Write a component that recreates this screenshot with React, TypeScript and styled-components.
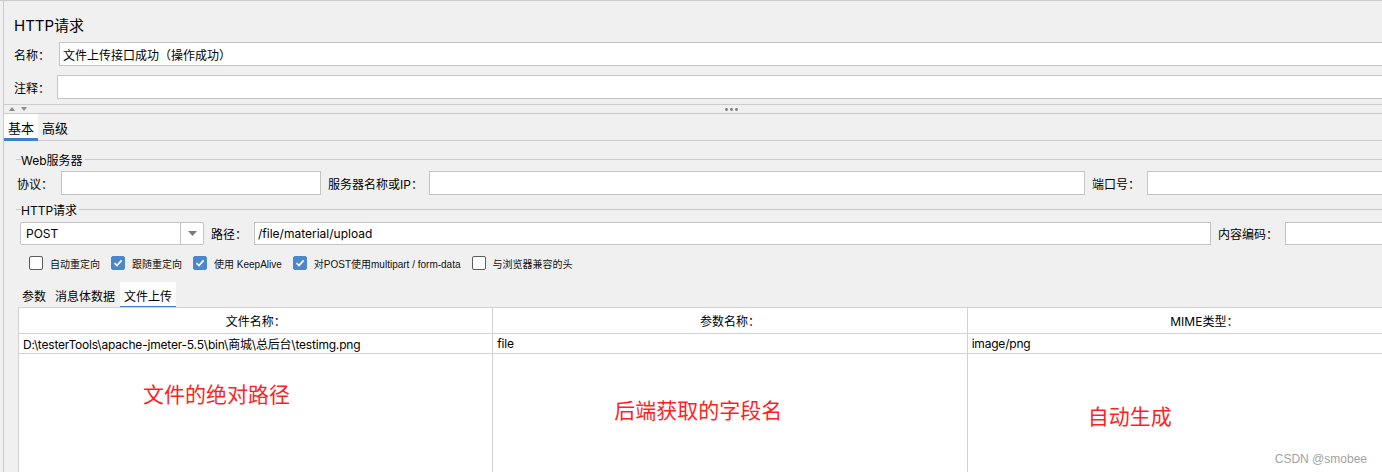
import styled, { createGlobalStyle } from 'styled-components'

const GlobalStyle = createGlobalStyle`
    html, body {
        margin: 0;
        padding: 0;
        background: #f0f0f0;
    }
    body {
        font-family: Inter, "Noto Sans CJK SC", sans-serif;
        font-size: 12px;
        color: #000;
    }
`

const LINE = '#cbcbcb'
const BLUE = '#3f80c9'

const Screen = styled.div`
    position: relative;
    width: 1382px;
    height: 472px;
    overflow: hidden;
    box-sizing: border-box;
    padding-left: 3px;
    background: #f0f0f0;
    border-top: 1px solid ${LINE};
`

const Panel = styled.div`
    width: 1454px;
    height: 100%;
    display: flex;
    flex-direction: column;
    border-left: 1px solid ${LINE};
`

const Title = styled.div`
    height: 41px;
    box-sizing: border-box;
    padding: 5px 0 0 10px;
    display: flex;
    align-items: center;
    font-size: 15px;
`

const Row = styled.div<{ $top?: number; $left: number; $h?: number }>`
    display: flex;
    align-items: center;
    height: ${p => p.$h ?? 24}px;
    margin-top: ${p => p.$top ?? 0}px;
    padding-left: ${p => p.$left}px;
`

const Label = styled.span<{ $w: number; $gap?: number }>`
    flex: none;
    width: ${p => p.$w}px;
    margin-left: ${p => p.$gap ?? 0}px;
    white-space: nowrap;
    font-size: 12px;
`

const Field = styled.input<{ $w?: number }>`
    box-sizing: border-box;
    height: 100%;
    ${p => (p.$w ? `width: ${p.$w}px; flex: none;` : 'flex: 1; min-width: 0;')}
    margin: 0;
    padding: 0 3px;
    border: 1px solid #c4c4c4;
    background: #fff;
    font: inherit;
    font-size: 12px;
    color: #000;
    outline: none;
`

const Splitter = styled.div`
    margin-top: 5px;
    height: 10px;
    box-sizing: border-box;
    border-top: 1px solid ${LINE};
    border-bottom: 1px solid ${LINE};
    display: grid;
    grid-template-columns: 30px 1fr 30px;
    align-items: center;
`

const Arrows = styled.svg`
    margin-left: 5px;
    display: block;
`

const Dots = styled.svg`
    justify-self: center;
    display: block;
`

const TabBar = styled.div`
    display: flex;
    height: 27px;
    box-sizing: border-box;
    border-bottom: 1px solid ${LINE};
`

const Tab = styled.div<{ $active?: boolean; $size: number }>`
    height: ${p => (p.$active ? 27 : 26)}px;
    box-sizing: border-box;
    padding: 0 4px;
    display: flex;
    align-items: center;
    font-size: ${p => p.$size}px;
    background: ${p => (p.$active ? '#fff' : 'transparent')};
    border-bottom: ${p => (p.$active ? `3px solid ${BLUE}` : 'none')};
    padding-top: ${p => (p.$active ? 2 : 0)}px;
`

const GroupHeader = styled.div<{ $top: number }>`
    display: flex;
    align-items: center;
    height: 16px;
    margin: ${p => p.$top}px 0 0 12px;
    font-size: 12px;

    &::before {
        content: '';
        width: 5px;
        height: 1px;
        background: ${LINE};
    }
    &::after {
        content: '';
        flex: 1;
        height: 1px;
        background: ${LINE};
    }
`

const Legend = styled.span`
    padding: 0 2px 0 0;
`

const Combo = styled.div`
    flex: none;
    width: 184px;
    height: 100%;
    box-sizing: border-box;
    display: flex;
    border: 1px solid #c4c4c4;
    border-radius: 2px;
    background: #fff;
`

const ComboText = styled.span`
    width: 159px;
    padding-left: 5px;
    box-sizing: border-box;
    display: flex;
    align-items: center;
    font-size: 12px;
`

const ComboButton = styled.span`
    flex: 1;
    border-left: 1px solid #c4c4c4;
    display: flex;
    align-items: center;
    justify-content: center;
`

const Checks = styled.div`
    display: flex;
    align-items: center;
    gap: 11px;
    height: 14px;
    margin-top: 11px;
    padding-left: 25px;
`

const CheckItem = styled.label`
    display: flex;
    align-items: center;
    gap: 7px;
    font-family: "Liberation Sans", "Noto Sans CJK SC", sans-serif;
    font-size: 10px;
    color: #111;
    white-space: nowrap;
`

const Box = styled.span<{ $on?: boolean }>`
    width: 14px;
    height: 14px;
    box-sizing: border-box;
    border-radius: 2px;
    display: flex;
    align-items: center;
    justify-content: center;
    background: ${p => (p.$on ? '#4a87cd' : '#fff')};
    border: 1px solid ${p => (p.$on ? '#4a87cd' : '#5c5c5c')};
`

const SubTabs = styled.div`
    display: flex;
    gap: 1px;
    height: 25px;
    margin-top: 12px;
    padding-left: 14px;
`

const Table = styled.div`
    flex: 1;
    width: 1424px;
    margin-left: 14px;
    box-sizing: border-box;
    display: grid;
    grid-template-columns: repeat(3, 1fr);
    grid-template-rows: 26px 20px 1fr;
    background: #fff;
    border-top: 1px solid #d2d2d2;
    border-left: 1px solid #d2d2d2;
`

const HeadCell = styled.div`
    border-right: 1px solid #d2d2d2;
    border-bottom: 1px solid #d2d2d2;
    display: flex;
    align-items: center;
    justify-content: center;
    font-size: 12px;
`

const DataCell = styled.div`
    border-right: 1px solid #d2d2d2;
    border-bottom: 1px solid #d2d2d2;
    display: flex;
    align-items: center;
    padding-left: 4px;
    font-size: 12px;
    letter-spacing: -0.2px;
    white-space: nowrap;
`

const BodyCell = styled.div<{ $x: number; $y: number }>`
    border-right: 1px solid #d2d2d2;
    padding: ${p => p.$y}px 0 0 ${p => p.$x}px;
`

const Note = styled.span`
    display: block;
    color: #ff1f1f;
    font-family: "Noto Sans CJK SC", sans-serif;
    font-size: 21px;
    line-height: 21px;
    white-space: nowrap;
`

const Watermark = styled.div`
    position: absolute;
    right: 15px;
    bottom: 6px;
    font-family: "Liberation Sans", Arial, sans-serif;
    font-size: 12px;
    color: #a3a3a3;
`

function Check({ on, label }: { on?: boolean; label: string }) {
    return (
        <CheckItem>
            <Box $on={on}>
                {on && (
                    <svg width="10" height="10" viewBox="0 0 10 10">
                        <path d="M1.5 5.2 L4 7.6 L8.6 2.4" fill="none" stroke="#fff" strokeWidth="1.7"/>
                    </svg>
                )}
            </Box>
            {label}
        </CheckItem>
    )
}

export default function App() {
    return (
        <Screen>
            <GlobalStyle/>
            <Panel>
                <Title>HTTP请求</Title>

                <Row $left={10}>
                    <Label $w={45}>名称：</Label>
                    <Field readOnly value="文件上传接口成功（操作成功）"/>
                </Row>
                <Row $left={10} $top={9}>
                    <Label $w={43}>注释：</Label>
                    <Field readOnly value=""/>
                </Row>

                <Splitter>
                    <Arrows width="20" height="4" viewBox="0 0 20 4">
                        <path d="M0 4 L3 0 L6 4 Z" fill="#8a8a8a"/>
                        <path d="M12 0 L18 0 L15 4 Z" fill="#8a8a8a"/>
                    </Arrows>
                    <Dots width="13" height="3" viewBox="0 0 13 3">
                        <circle cx="1.5" cy="1.5" r="1.4" fill="#7c7c7c"/>
                        <circle cx="6.5" cy="1.5" r="1.4" fill="#7c7c7c"/>
                        <circle cx="11.5" cy="1.5" r="1.4" fill="#7c7c7c"/>
                    </Dots>
                    <span/>
                </Splitter>

                <TabBar>
                    <Tab $active $size={13}>基本</Tab>
                    <Tab $size={13}>高级</Tab>
                </TabBar>

                <GroupHeader $top={10}><Legend>Web服务器</Legend></GroupHeader>
                <Row $left={13} $top={4}>
                    <Label $w={44}>协议：</Label>
                    <Field $w={260} readOnly value=""/>
                    <Label $w={101} $gap={7}>服务器名称或IP：</Label>
                    <Field $w={656} readOnly value=""/>
                    <Label $w={55} $gap={7}>端口号：</Label>
                    <Field readOnly value=""/>
                </Row>

                <GroupHeader $top={6}><Legend>HTTP请求</Legend></GroupHeader>
                <Row $left={16} $top={5} $h={23}>
                    <Combo>
                        <ComboText>POST</ComboText>
                        <ComboButton>
                            <svg width="9" height="5" viewBox="0 0 9 5">
                                <path d="M0 0 L9 0 L4.5 5 Z" fill="#7a7a7a"/>
                            </svg>
                        </ComboButton>
                    </Combo>
                    <Label $w={43} $gap={7}>路径：</Label>
                    <Field $w={957} readOnly value="/file/material/upload"/>
                    <Label $w={67} $gap={7}>内容编码：</Label>
                    <Field readOnly value=""/>
                </Row>

                <Checks>
                    <Check label="自动重定向"/>
                    <Check on label="跟随重定向"/>
                    <Check on label="使用 KeepAlive"/>
                    <Check on label="对POST使用multipart / form-data"/>
                    <Check label="与浏览器兼容的头"/>
                </Checks>

                <SubTabs>
                    <Tab $size={12}>参数</Tab>
                    <Tab $size={12}>消息体数据</Tab>
                    <Tab $active $size={12}>文件上传</Tab>
                </SubTabs>

                <Table>
                    <HeadCell>文件名称：</HeadCell>
                    <HeadCell>参数名称：</HeadCell>
                    <HeadCell>MIME类型：</HeadCell>

                    <DataCell>D:\testerTools\apache-jmeter-5.5\bin\商城\总后台\testimg.png</DataCell>
                    <DataCell>file</DataCell>
                    <DataCell>image/png</DataCell>

                    <BodyCell $x={124} $y={29}><Note>文件的绝对路径</Note></BodyCell>
                    <BodyCell $x={121} $y={45}><Note>后端获取的字段名</Note></BodyCell>
                    <BodyCell $x={120} $y={51}><Note>自动生成</Note></BodyCell>
                </Table>
            </Panel>
            <Watermark>CSDN @smobee</Watermark>
        </Screen>
    )
}
